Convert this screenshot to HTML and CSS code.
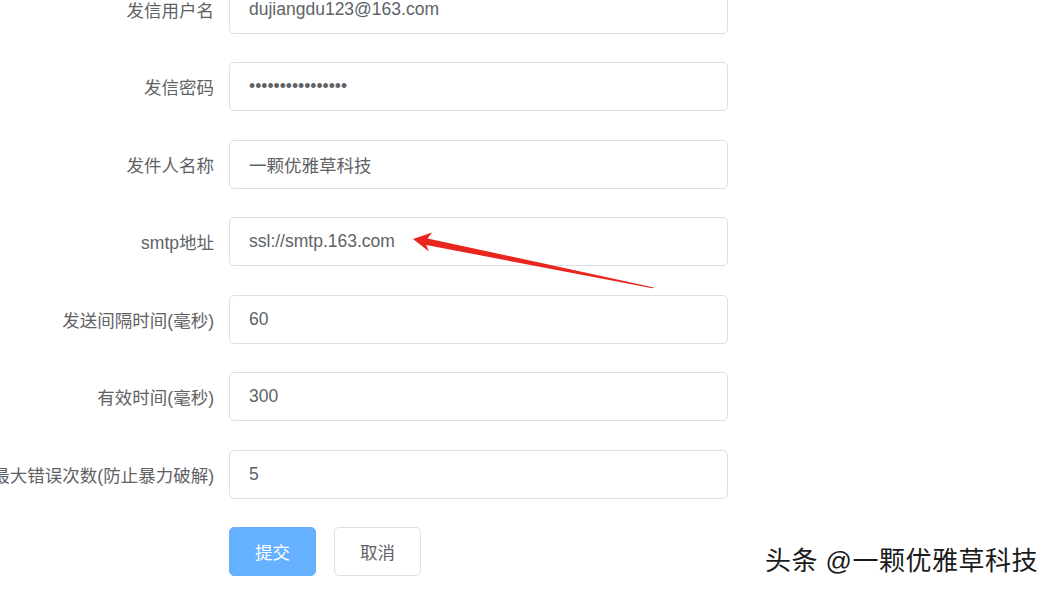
FILE: index.html
```html
<!DOCTYPE html>
<html lang="zh-CN">
<head>
  <meta charset="UTF-8" />
  <meta name="viewport" content="width=device-width, initial-scale=1.0" />
  <title>邮件设置</title>
  <link rel="stylesheet" href="styles.css">
</head>
<body>
<div class="page">
  <form class="mail-form">
    <!-- 发信账号 -->
    <div class="form-item">
      <label class="form-label">发信用户名</label>
      <div class="form-content"><input class="form-input" type="text" value="dujiangdu123@163.com"></div>
    </div>

    <div class="form-item">
      <label class="form-label">发信密码</label>
      <div class="form-content"><input class="form-input" type="password" value="abcdefghijklmnop"></div>
    </div>

    <div class="form-item">
      <label class="form-label">发件人名称</label>
      <div class="form-content"><input class="form-input" type="text" value="一颗优雅草科技"></div>
    </div>

    <div class="form-item">
      <label class="form-label">smtp地址</label>
      <div class="form-content"><input class="form-input" type="text" value="ssl://smtp.163.com"></div>
    </div>

    <!-- 验证码相关 -->
    <div class="form-item">
      <label class="form-label">发送间隔时间(毫秒)</label>
      <div class="form-content"><input class="form-input" type="text" value="60"></div>
    </div>

    <div class="form-item">
      <label class="form-label">有效时间(毫秒)</label>
      <div class="form-content"><input class="form-input" type="text" value="300"></div>
    </div>

    <div class="form-item">
      <label class="form-label">最大错误次数(防止暴力破解)</label>
      <div class="form-content"><input class="form-input" type="text" value="5"></div>
    </div>

    <div class="form-item">
      <span class="form-label"></span>
      <div class="form-content buttons">
        <button type="button" class="btn btn-primary">提交</button>
        <button type="button" class="btn">取消</button>
      </div>
    </div>
  </form>

  <!-- 标注箭头 -->
  <svg class="arrow" width="1056" height="590" viewBox="0 0 1056 590">
    <polygon fill="#e8261d" points="413,239 432,232.5 427.6,238.4 654,287.5 652.5,288.3 426.2,245 429,251.5"/>
  </svg>

  <div class="watermark">头条 @一颗优雅草科技</div>
</div>
</body>
</html>
```

FILE: styles.css
```css
/* 页面 */
html, body {
  margin: 0;
  background: #fff;
}

.page {
  position: relative;
  width: 1056px;
  height: 590px;
  overflow: hidden;
  font-family: "Liberation Sans", "Noto Sans CJK SC", sans-serif;
}

/* 表单 */
.mail-form {
  margin-top: -15.5px;
  width: 728px;
}

.form-item {
  display: flex;
  align-items: center;
  height: 49px;
  margin-bottom: 28.5px;
}

.form-label {
  flex: 0 0 214px;
  width: 214px;
  padding-right: 15px;
  display: flex;
  justify-content: flex-end;
  white-space: nowrap;
  font-size: 17.5px;
  color: #606266;
}

.form-content {
  flex: 1;
  display: flex;
}

.form-input {
  box-sizing: border-box;
  width: 499px;
  height: 49px;
  padding: 0 19px;
  border: 1px solid #dcdfe6;
  border-radius: 5px;
  font-family: inherit;
  font-size: 17.5px;
  color: #606266;
  outline: none;
}

/* 按钮 */
.buttons {
  gap: 18px;
}

.btn {
  box-sizing: border-box;
  width: 87px;
  height: 49px;
  border: 1px solid #dcdfe6;
  border-radius: 5px;
  background: #fff;
  font-family: inherit;
  font-size: 17.5px;
  color: #606266;
  cursor: pointer;
}

.btn-primary {
  background: #66b1ff;
  border-color: #66b1ff;
  color: #fff;
}

/* 覆盖层 */
.arrow {
  position: absolute;
  left: 0;
  top: 0;
  pointer-events: none;
}

.watermark {
  position: absolute;
  right: 18px;
  top: 540px;
  font-size: 26px;
  letter-spacing: 0.5px;
  color: #1a1a1a;
  text-shadow: 1px 1px 0 #fff, -1px -1px 0 #fff;
}
```
